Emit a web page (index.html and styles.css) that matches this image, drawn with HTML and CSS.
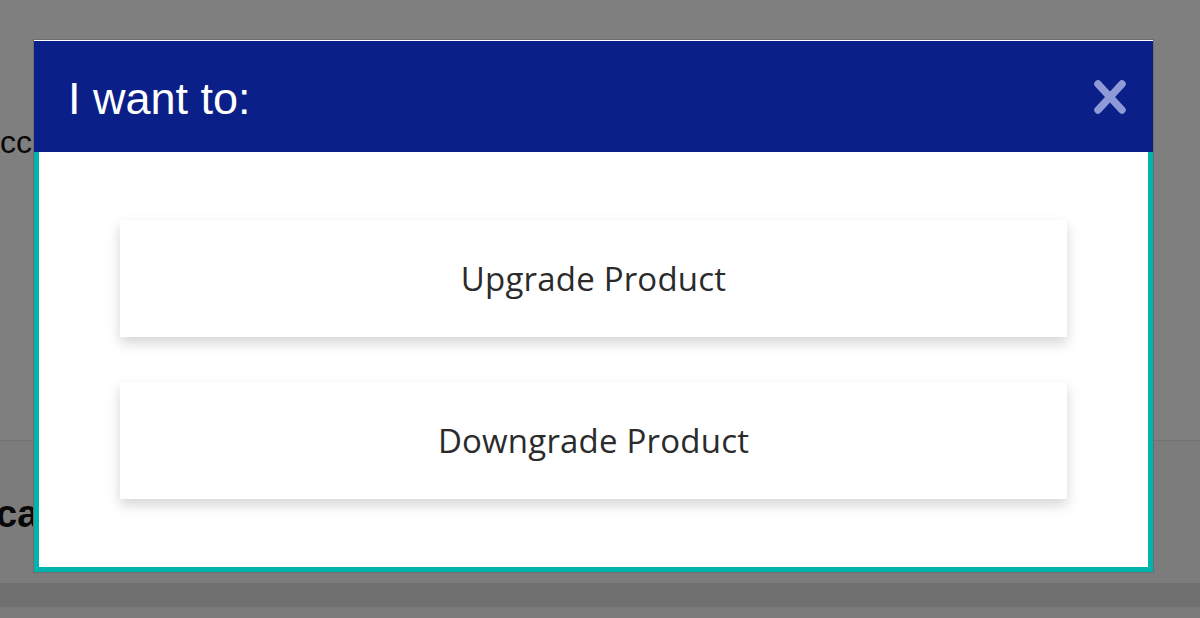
FILE: index.html
```html
<!DOCTYPE html>
<html lang="en">
<head>
    <meta charset="UTF-8">
    <meta name="viewport" content="width=device-width, initial-scale=1.0">
    <title>I want to</title>
    <link rel="stylesheet" href="styles.css">
</head>
<body>
    <div class="page">
        <div class="page-top">
            <p class="page-label">cc</p>
        </div>
        <div class="page-section">
            <p class="page-heading">ca</p>
        </div>
        <div class="page-footer"></div>
        <div class="page-bottom"></div>
    </div>

    <div class="overlay">
        <div class="modal">
            <div class="modal-header">
                <h1>I want to:</h1>
                <button class="close" aria-label="Close">
                    <svg width="34" height="36" viewBox="0 0 34 36">
                        <path d="M5 5 L29 31 M29 5 L5 31" stroke="#8e9bd8" stroke-width="7.5" stroke-linecap="round"/>
                    </svg>
                </button>
            </div>
            <div class="modal-body">
                <button class="option">Upgrade Product</button>
                <button class="option">Downgrade Product</button>
            </div>
        </div>
    </div>
</body>
</html>
```

FILE: styles.css
```css
body {
    margin: 0;
    font-family: "Liberation Sans", Arial, sans-serif;
    background-color: #fff;
    color: #111;
}

.page {
    height: 618px;
    display: flex;
    flex-direction: column;
    overflow: hidden;
}

.page-top {
    height: 440px;
    background-color: #fff;
    border-bottom: 1px solid #e6e6e6;
}

.page-label {
    margin: 124px 0 0 0;
    font-size: 32px;
}

.page-section {
    height: 142px;
    background-color: #f9f9f9;
}

.page-heading {
    margin: 52px 0 0 -4px;
    font-size: 38px;
    font-weight: bold;
}

.page-footer {
    height: 24px;
    background-color: #e1e1e1;
}

.page-bottom {
    flex: 1;
    background-color: #f4f4f4;
}

.overlay {
    position: fixed;
    inset: 0;
    background-color: rgba(0, 0, 0, 0.5);
}

.modal {
    position: absolute;
    left: 33px;
    top: 39px;
    width: 1119px;
    background-color: #fff;
    border: 1px solid #6d6d6d;
    padding-top: 1px;
}

.modal-header {
    height: 111px;
    box-sizing: border-box;
    background-color: #0a1f87;
    display: flex;
    align-items: center;
    justify-content: space-between;
    padding: 4px 26px 0 34px;
}

.modal-header h1 {
    margin: 0;
    color: #fff;
    font-size: 45px;
    font-weight: normal;
}

.close {
    background: none;
    border: none;
    padding: 0;
    margin-top: -4px;
    cursor: pointer;
    display: flex;
}

.modal-body {
    border: 5px solid #00b3ab;
    border-top: none;
    padding: 68px 81px;
    display: flex;
    flex-direction: column;
    gap: 45px;
}

.option {
    height: 117px;
    background-color: #fff;
    border: none;
    box-shadow: 0 6px 12px rgba(0, 0, 0, 0.17);
    font-family: "Open Sans", sans-serif;
    font-size: 33px;
    letter-spacing: 0.2px;
    color: #2b2b2b;
    cursor: pointer;
}
```
